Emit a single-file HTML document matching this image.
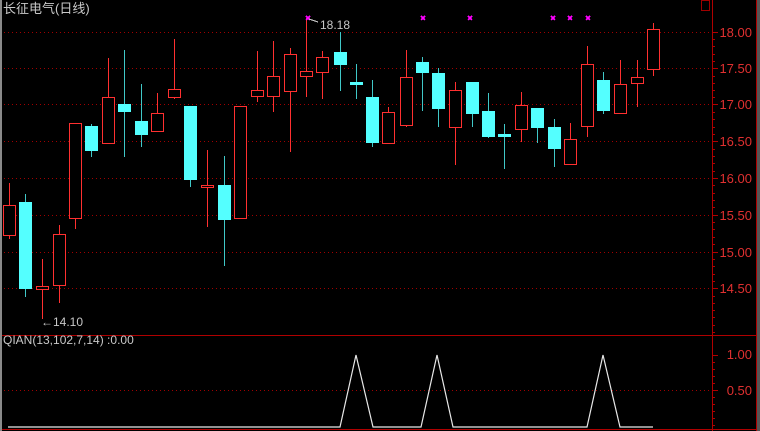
<!DOCTYPE html>
<html><head><meta charset="utf-8"><style>
html,body{margin:0;padding:0;background:#000;width:760px;height:431px;overflow:hidden}
svg{display:block}
text{font-family:"Liberation Sans","Noto Sans CJK SC",sans-serif}
</style></head><body>
<svg width="760" height="431" xmlns="http://www.w3.org/2000/svg" shape-rendering="crispEdges">
<rect width="760" height="431" fill="#000"/>
<rect x="0" y="0" width="2" height="431" fill="#8a8a8a"/>
<g stroke="#a00000" stroke-dasharray="1,3" stroke-width="1">
<line x1="4" y1="32.5" x2="712" y2="32.5"/><line x1="4" y1="68.5" x2="712" y2="68.5"/>
<line x1="4" y1="104.5" x2="712" y2="104.5"/><line x1="4" y1="141.5" x2="712" y2="141.5"/>
<line x1="4" y1="178.5" x2="712" y2="178.5"/><line x1="4" y1="215.5" x2="712" y2="215.5"/>
<line x1="4" y1="252.5" x2="712" y2="252.5"/><line x1="4" y1="288.5" x2="712" y2="288.5"/>
<line x1="4" y1="390.5" x2="712" y2="390.5"/>
</g>
<line x1="2" y1="335.5" x2="756" y2="335.5" stroke="#b00000"/>
<line x1="2" y1="429.5" x2="756" y2="429.5" stroke="#b00000"/>
<line x1="712.5" y1="0" x2="712.5" y2="431" stroke="#b00000"/>
<line x1="756.5" y1="0" x2="756.5" y2="431" stroke="#b00000"/>
<rect x="757" y="0" width="3" height="431" fill="#555"/>
<rect x="701.5" y="0.5" width="8" height="10" fill="none" stroke="#a00000"/>
<path stroke="#b00000" fill="none" d="M712 32.5h6M712 68.5h6M712 104.5h6M712 141.5h6M712 178.5h6M712 215.5h6M712 252.5h6M712 288.5h6M712 355.5h6M712 390.5h6
M712 39.5h3M712 46.5h3M712 54.5h3M712 61.5h3M712 76.5h3M712 83.5h3M712 90.5h3M712 97.5h3M712 112.5h3M712 119.5h3M712 127.5h3M712 134.5h3
M712 149.5h3M712 156.5h3M712 163.5h3M712 171.5h3M712 185.5h3M712 193.5h3M712 200.5h3M712 207.5h3M712 222.5h3M712 229.5h3M712 237.5h3M712 244.5h3
M712 259.5h3M712 266.5h3M712 274.5h3M712 281.5h3M712 296.5h3M712 303.5h3M712 310.5h3M712 317.5h3M712 325.5h3M712 332.5h3
M712 362.5h3M712 369.5h3M712 376.5h3M712 383.5h3M712 397.5h3M712 404.5h3M712 411.5h3M712 418.5h3M712 425.5h3"/>
<g fill="#e03030" font-size="13" text-anchor="end">
<text x="752" y="37">18.00</text><text x="752" y="73">17.50</text><text x="752" y="109">17.00</text>
<text x="752" y="146">16.50</text><text x="752" y="183">16.00</text><text x="752" y="220">15.50</text>
<text x="752" y="257">15.00</text><text x="752" y="293">14.50</text>
<text x="752" y="359">1.00</text><text x="752" y="395">0.50</text>
</g>
<!-- cyan candles -->
<path stroke="#40c8c8" fill="none" d="M25.5 194V297M91.5 124V157M124.5 50V157M141.5 84V147M190.5 106V187M224.5 156V266M340.5 32V91M356.5 64V99M372.5 80V147M422.5 57V111M438.5 68V127M472.5 82V127M488.5 93V138M504.5 124V169M537.5 108V143M554.5 119V167M603.5 72V114"/>
<g fill="#54ffff">
<rect x="19" y="202" width="13" height="87"/><rect x="85" y="126" width="13" height="25"/>
<rect x="118" y="104" width="13" height="8"/><rect x="135" y="121" width="13" height="14"/>
<rect x="184" y="106" width="13" height="74"/><rect x="218" y="185" width="13" height="35"/>
<rect x="334" y="52" width="13" height="13"/><rect x="350" y="82" width="13" height="3"/>
<rect x="366" y="97" width="13" height="46"/><rect x="416" y="62" width="13" height="11"/>
<rect x="432" y="73" width="13" height="36"/><rect x="466" y="82" width="13" height="32"/>
<rect x="482" y="111" width="13" height="26"/><rect x="498" y="134" width="13" height="3"/>
<rect x="531" y="108" width="13" height="20"/><rect x="548" y="127" width="13" height="22"/>
<rect x="597" y="80" width="13" height="31"/>
</g>
<!-- red candles -->
<path stroke="#ff3030" fill="none" d="M9.5 183V239M42.5 259V319M59.5 225V303M75.5 123V229M108.5 58V143M157.5 93V131M174.5 39V99M207.5 150V227M240.5 106V218M257.5 51V102M273.5 41V112M290.5 48V152M306.5 18V97M322.5 51V99M388.5 107V143M406.5 50V127M455.5 82V165M521.5 92V142M570.5 123V164M587.5 46V137M620.5 60V113M637.5 60V107M653.5 23V76"/>
<g fill="#000" stroke="#ff3030">
<rect x="3.5" y="205.5" width="12" height="30"/><rect x="36.5" y="286.5" width="12" height="3"/>
<rect x="53.5" y="234.5" width="12" height="51"/><rect x="69.5" y="123.5" width="12" height="95"/>
<rect x="102.5" y="97.5" width="12" height="46"/><rect x="151.5" y="113.5" width="12" height="18"/>
<rect x="168.5" y="89.5" width="12" height="8"/><rect x="201.5" y="185.5" width="12" height="2"/>
<rect x="234.5" y="106.5" width="12" height="112"/><rect x="251.5" y="90.5" width="12" height="6"/>
<rect x="267.5" y="76.5" width="12" height="20"/><rect x="284.5" y="54.5" width="12" height="37"/>
<rect x="300.5" y="71.5" width="12" height="5"/><rect x="316.5" y="57.5" width="12" height="15"/>
<rect x="382.5" y="112.5" width="12" height="31"/><rect x="400.5" y="77.5" width="12" height="48"/>
<rect x="449.5" y="90.5" width="12" height="37"/><rect x="515.5" y="105.5" width="12" height="24"/>
<rect x="564.5" y="139.5" width="12" height="25"/><rect x="581.5" y="64.5" width="12" height="62"/>
<rect x="614.5" y="84.5" width="12" height="29"/><rect x="631.5" y="77.5" width="12" height="6"/>
<rect x="647.5" y="29.5" width="12" height="40"/>
</g>
<g stroke="#ff00ff" stroke-width="1.5">
<path d="M306 16l4 4M310 16l-4 4M421 16l4 4M425 16l-4 4M468 16l4 4M472 16l-4 4M551 16l4 4M555 16l-4 4M568 16l4 4M572 16l-4 4M586 16l4 4M590 16l-4 4"/>
</g>
<path d="M309 19 L318 22" stroke="#ccc" fill="none"/>
<g fill="#c8c8c8" font-size="12">
<text x="320" y="29">18.18</text>
<text x="41" y="326">←14.10</text>
<text x="3" y="344">QIAN(13,102,7,14) :0.00</text>
</g>
<text x="3" y="13" fill="#c8c8c8" font-size="13">长征电气(日线)</text>
<polyline shape-rendering="auto" fill="none" stroke="#e8e8e8" stroke-width="1.2" points="8,427 340,427 356,355 373,427 421,427 437,355 453,427 587,427 603,355 620,427 653,427"/>
</svg>
</body></html>
